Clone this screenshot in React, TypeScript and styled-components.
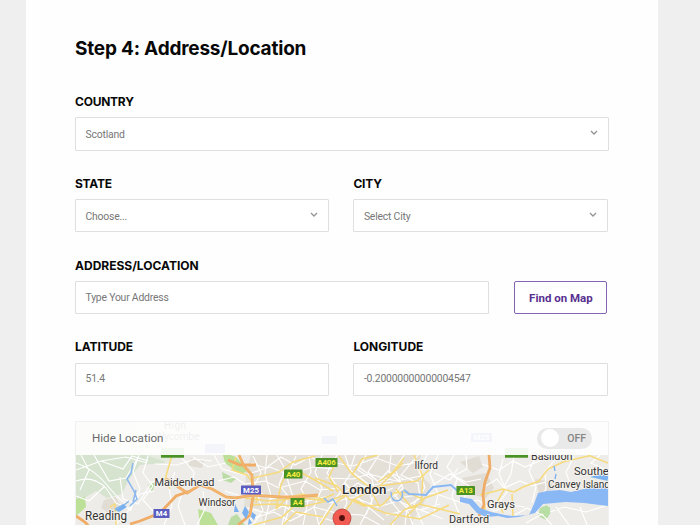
import React from "react";
import styled, { createGlobalStyle } from "styled-components";

const GlobalStyle = createGlobalStyle`
  * { box-sizing: border-box; }
  body { margin: 0; background: #efefef; overflow: hidden; font-family: Roboto, sans-serif; }
`;

const Page = styled.main`
  width: 700px;
  height: 525px;
  overflow: hidden;
  padding-left: 26px;
  background: #efefef;
`;

const Panel = styled.section`
  width: 632px;
  height: 525px;
  padding: 35px 49px 0;
  background: #fefefe;
  overflow: hidden;
`;

const Title = styled.h1`
  margin: 0;
  height: 56.4px;
  font: 700 19px/28px Inter, sans-serif;
  letter-spacing: -0.2px;
  color: #080808;
  white-space: nowrap;
`;

const Row = styled.div<{ $columns?: string; $gap?: number }>`
  display: grid;
  grid-template-columns: ${(p) => p.$columns || "1fr"};
  column-gap: ${(p) => p.$gap ?? 24}px;
  align-items: end;
  height: 59.3px;
  margin-bottom: 22.5px;
`;

const Field = styled.label`
  display: block;
  min-width: 0;
`;

const Label = styled.span<{ $spacing?: number }>`
  display: block;
  height: 25.8px;
  padding-top: 0.6px;
  font: 700 12px/20px Inter, sans-serif;
  letter-spacing: ${(p) => p.$spacing ?? 0}px;
  color: #080808;
  white-space: nowrap;
`;

const Control = styled.span<{ $input?: boolean }>`
  display: flex;
  align-items: center;
  justify-content: space-between;
  height: 33.5px;
  padding: ${(p) => (p.$input ? "0 10px 1px 9.5px" : "1px 10px 0 9.5px")};
  border: 1px solid #dfdfdf;
  border-radius: 1px;
  background: #fff;
  color: #777;
  font-size: 10.4px;
  letter-spacing: -0.2px;
`;

const Chevron = styled.svg`
  width: 8px;
  height: 6px;
  margin-top: -2px;
  fill: none;
  stroke: #929292;
  stroke-width: 1.3;
`;

const FindButton = styled.button`
  height: 33.5px;
  padding: 0;
  border: 1px solid #8763b3;
  border-radius: 2px;
  background: #fff;
  color: #58308f;
  font: 700 11.5px Roboto, sans-serif;
`;

const MapFrame = styled.div`
  position: relative;
  width: 534px;
  height: 105px;
  margin-top: 25px;
  border: 1px solid #f1f1f1;
  border-bottom: 0;
`;

const MapDrawing = styled.svg`
  display: block;
  width: 532px;
  height: 104px;
  font-family: Roboto, sans-serif;
`;

const MapHeader = styled.div`
  position: absolute;
  inset: 0 0 auto;
  height: 33.4px;
  display: flex;
  align-items: center;
  justify-content: space-between;
  padding: 0 16px 1px;
  background: rgba(254, 254, 254, 0.94);
  color: #686868;
  font-size: 11.6px;
`;

const Switch = styled.span`
  display: flex;
  align-items: center;
  justify-content: space-between;
  width: 55px;
  height: 21px;
  padding: 0 6px 0 4px;
  border-radius: 11px;
  background: #e9e9e9;
  color: #858585;
  font-size: 10.5px;
  font-weight: 500;
`;

const Knob = styled.span`
  width: 18px;
  height: 18px;
  border-radius: 50%;
  background: #fff;
`;

type FieldProps = { label: string; value: string; spacing?: number };

const Select = ({ label, value, spacing }: FieldProps) => (
  <Field>
    <Label $spacing={spacing}>{label}</Label>
    <Control>
      {value}
      <Chevron viewBox="0 0 8 6"><path d="m1 1 3 3 3-3" /></Chevron>
    </Control>
  </Field>
);

const TextField = ({ label, value, spacing }: FieldProps) => (
  <Field>
    <Label $spacing={spacing}>{label}</Label>
    <Control $input>{value}</Control>
  </Field>
);

const Shield = ({ x, y, w, text, motorway }: { x: number; y: number; w: number; text: string; motorway?: boolean }) => (
  <g>
    <rect x={x} y={y} width={w} height="9" rx=".6" fill={motorway ? "#5a5cc0" : "#4b9224"} />
    <text x={x + w / 2} y={y + 7.3} textAnchor="middle" fontSize="7.8" fontWeight="700" fill={motorway ? "#fff" : "#f5ed41"}>{text}</text>
  </g>
);

const places: [string, number, number, number, number][] = [
  ["Maidenhead", 154.5, 486, 11.3, 60],
  ["Reading", 85, 520, 12, 42],
  ["Windsor", 198.5, 506, 10.4, 37],
  ["Ilford", 414.5, 469, 10.4, 23.5],
  ["Basildon", 531, 460, 10.8, 41.5],
  ["Southend", 574, 475, 11.6, 47],
  ["Canvey Island", 548, 488, 10.2, 62],
  ["Grays", 487, 508, 11, 28],
  ["Dartford", 449, 523, 11, 40],
];

const RegionMap = () => (
  <MapDrawing viewBox="76 422 532 104">
    <rect x="76" y="421" width="532" height="105" fill="#eeece8" />
    <path d="M76 421H195L181 449 164 463 140 465 129 479 122 494 107 498 96 491 76 503Z" fill="#d5e3cf" />
    <path d="M135 421h70l-12 30-27 11-21-7Z" fill="#e5ebdf" />
    <path d="M76 499l9-2 1 10-10 9ZM198 509l13 4 7 12h-18ZM222 452l14 5 13 14-9 3-15-11ZM246 493l7-4 4 9-8 3Z" fill="#bce097" />
    <path d="M148 485l8-3-4 10ZM222 472l14 7-5 4-8-3ZM293 507l7 3-3 6-8-3ZM231 517l6-3 8 11h-17ZM352 475l6-3 3 7-7 2ZM386 468l5 2-2 5-5-2ZM540 508l7-3 4 7-5 8-8-4Z" fill="#bcdca6" />
    <path d="M104 500l11-3 7 9-12 8-9-6ZM191 458l13 3-2 7-14-2ZM462 478l24-5 8 15-8 10-18-4ZM535 479l15 2 5 8-16 4ZM460 462l19-6 4 11-10 6Z" fill="#e2ddd4" />
    <path d="M251 455h170l-3 18 13 12-8 20-13 20h-145l-6-16-15-3 2-34Z" fill="#e4dfd7" />
    <g fill="none" stroke="#fff" strokeWidth="1.15">
      <path d="M76 463q18 6 31 22t19 18M76 481q17-6 30 7l10 15 16 7M76 470l25-9 22 8 9-13 16 5M81 455l8 15-9 20M94 455l15 26 17-3 13-22M101 461l25-4 21 6M104 487l-15 14-13-5M120 477l3 22 15 5 14-22 14-4M139 455l-6 17 7 17-10 22M148 456l-5 17 10 13-10 14 10 11M155 464l22 1 18-6 17 2M154 491l-14 3-11 16-14 15M175 472l-6 15 3 19-8 19M182 458l12 14-2 14M183 490l-5 16 7 19M193 457l15 10 18-4M203 491l2 18-8 16" />
      <path d="M214 455l8 14 23 6 25-8 19 8 24-8 20 2M218 481l16-4 11 7 20-3 14 7 26-7 15 9 20-2M225 491l16 5 13-6 18 9 14-4 18 7 25-6M253 456l8 17-7 13 9 24-10 15M267 455l-2 19 6 22-7 29M277 455l8 14-6 16 9 11-6 29M296 456l-9 22 6 19-9 28M309 456l2 16-10 17 7 12-5 24M322 455l-7 17 7 16-8 19 5 18M337 455l-10 18 14 18-14 20-8 14M345 455l6 18-8 12 4 18-10 22" />
      <path d="M355 455l-5 15 18 14 4 18-12 23M366 455l-8 15 14 9 3 14-9 22M379 455l-11 17 10 10 10-11 15 8M391 455l-2 17 13 12-12 16 9 11-7 14M404 455l-9 14 8 19-8 8 12 12-2 17M418 455l-17 20 17 8 2 15-14 9 7 18M329 462l24 4 23-8 22 8 20-4M326 478l27 1 16-5 27 7 25-5M329 503l25-6 24 10 20-6 22 9 20-6M340 514l22 1 18 10M386 515l30-7 27 11M404 497l30-4 28 10 16-3 16 11 17-6 14 2" />
      <path d="M427 455l-8 15 6 18-11 16 9 21M438 455l-8 19 8 20-4 19M454 455l-7 12 10 12-5 17 8 20M466 455l1 14-14 7 16 10-5 12M482 464l17 6 14-9 12 6 17-7M484 487l13-8 7 9 16-7 12 5 14-4M503 459l-4 15 8 18-10 13M514 456l-3 18-6 11M536 457l-7 14 7 16-4 16M557 457l-12 15 1 17-9 12M574 457l-8 15 4 12M600 455l-9 8 17 8M515 515l12-7 15 7 22-8 22 5 22-7M526 523l16-9 10 11M556 507l13 18M580 507l7 18" />
      <path d="M251 463l15 5 15-11 14 8 15-8 18 7M248 508l19 5 16-7 17 9 14-8 22 6M250 519l24-7 16 9 16-8 27 8M341 495l17-12 18 12 17-7M345 483l17 19 22 18M352 503l13-17 28-4M360 468l19 14 12-3M433 485l17-11 16 8 15-3M434 473l16 7 8-12" />
    </g>
    <g fill="none" stroke="#f6da7c" strokeWidth="1.5">
      <path d="M172 455l-4 14-3 11 5 9M236 457l-4 13 15 5 11 16-2 12M253 478l26-6 14-10 22-6M276 509l5-24 8-16M276 509l11-11 15-4 20 5 12-5M245 498l24 3 32-3 27 3 28-10 31-6 30-4 14-13M338 492l-9-15 7-15M315 478l22 8 12 13 15 7 18-1 12-12 12-1 17 7M339 456l13 18 17 13 11 20M352 475l10-16 16-4M343 514l11-15 25-12 24-24M354 500l31 13 35 6 29-14M378 482l15-10 11-14M396 489l16 19 9-5 2-26-9-22M407 516l18-18 23-8M390 525l14-15 15-6 41 10M283 525l13-13 27 5M253 525l29-8 20-18" />
      <path d="M480 495l12-3 11-3 11 3 9-5 16-6 9-12 15-7 12-3 14-3M512 494l1 23M484 499l2 22M504 490l-6 10 5 13M588 455l20 8" />
      <path d="M110 507l5-3 1 21M250 505l24-1 27 3 26-6M320 525l14-21 18-13M333 491l-20-12-13-7" />
    </g>
    <g fill="none" stroke="#efac66" strokeWidth="2.8">
      <path d="M239 455l5 11 8 9 1 22-3 18-12 10M228 460l12 5 16 0M166 479l11 7 10 7 13-8 12 4 14 8 9 1 18-3 27 2 18 0 20-2M76 516l9 6 7 8M130 524l10-3 20-8 16-17 14-5M489 455l1 13-5 14-2 12 1 11-5 11" />
    </g>
    <path d="M166 479l11 7 10 7 13-8 12 4 14 8 9 1 18-3 27 2 18 0 20-2M239 455l5 11 8 9 1 22-3 18" fill="none" stroke="#f6bd72" strokeWidth=".8" />
    <path d="M133 463l-2 10-4 6 7 12 3 8-7 7M115 509l9-4 5-4M136 490l-3 12M324 498l4 4 5-3 4 7M391 492q0 9 6 9 7-1 5-10" fill="none" stroke="#8bb8ed" strokeWidth="1.5" />
    <path d="M404 490l5 4 17 1 7-8 18-2 10 9" fill="none" stroke="#8ab8f5" strokeWidth="2" />
    <path d="M460 497l12 2 8 9 11 4 5 1 9 2 8 1 16-1 5-11 4-11 9-2 13-1 11 2 21-5 16-1v20l-24-3-18-1-23 2-8 9-16 4-12 1-9-2-12 1-9-4-8-9-9-2Z" fill="#8ab8f5" />
    <path d="M544 506l6 1v7l-5 3-4-6Z" fill="#b7dfa5" />
    <path d="M115 510l8-6 4 3-8 5ZM235 504l4 8h-5ZM245 506l4 6-3 7-4-6ZM252 512l4 3-2 5-3-3M249 518l3 5-4 2M590 477l11-3 7 2v5Z" fill="#7ab0ef" />
    <path d="M554 466l1 5m1 3l-1 5" fill="none" stroke="#7ab0ef" strokeWidth="1.3" />
    <rect x="161" y="448" width="23" height="9.7" fill="#4b9224" />
    <rect x="505" y="448" width="23" height="9.7" fill="#4b9224" />
    <rect x="205" y="444" width="20" height="9" fill="#5a5cc0" />
    <rect x="322" y="436" width="15" height="8" fill="#5a5cc0" />
    <Shield x={471} y={433} w={21} text="M25" motorway />
    <text x="164" y="429" fontSize="10" textLength="22">High</text>
    <text x="155" y="439.5" fontSize="10.5" textLength="44.5">Wycombe</text>
    <Shield x={315.5} y={458} w={22} text="A406" />
    <Shield x={284} y={469.5} w={18.5} text="A40" />
    <Shield x={290.5} y={498} w={14} text="A4" />
    <Shield x={456.5} y={486} w={18.5} text="A13" />
    <Shield x={241} y={485.5} w={20} text="M25" motorway />
    <Shield x={153.5} y={509} w={16} text="M4" motorway />
    {places.map(([name, x, y, size, length]) => (
      <text key={name} x={x} y={y} fontSize={size} textLength={length} lengthAdjust="spacingAndGlyphs" fill="#333" stroke="#f7f5f1" strokeWidth="1.5" paintOrder="stroke">{name}</text>
    ))}
    <text x="342" y="494" fontSize="13" fontWeight="500" textLength="44.5" lengthAdjust="spacingAndGlyphs" fill="#292929" stroke="#f7f5f1" strokeWidth="1.5" paintOrder="stroke">London</text>
    <path d="M342 509a9 9 0 0 1 9 9c0 5-4 8-6 14h-6c-2-6-6-9-6-14a9 9 0 0 1 9-9Z" fill="#f25b52" stroke="#b8423c" strokeWidth=".8" />
    <circle cx="342" cy="518" r="2.9" fill="#54110e" />
  </MapDrawing>
);

export default function App() {
  return (
    <>
      <GlobalStyle />
      <Page>
        <Panel>
          <Title>Step 4: Address/Location</Title>
          <Row><Select label="COUNTRY" value="Scotland" spacing={-0.24} /></Row>
          <Row $columns="254.4px 255px">
            <Select label="STATE" value="Choose..." spacing={-0.25} />
            <Select label="CITY" value="Select City" spacing={-0.2} />
          </Row>
          <Row $columns="414.4px 93px" $gap={25}>
            <TextField label="ADDRESS/LOCATION" value="Type Your Address" />
            <FindButton type="button">Find on Map</FindButton>
          </Row>
          <Row $columns="254.4px 255px">
            <TextField label="LATITUDE" value="51.4" spacing={-0.1} />
            <TextField label="LONGITUDE" value="-0.20000000000004547" />
          </Row>
          <MapFrame>
            <RegionMap />
            <MapHeader>
              Hide Location
              <Switch><Knob />OFF</Switch>
            </MapHeader>
          </MapFrame>
        </Panel>
      </Page>
    </>
  );
}
